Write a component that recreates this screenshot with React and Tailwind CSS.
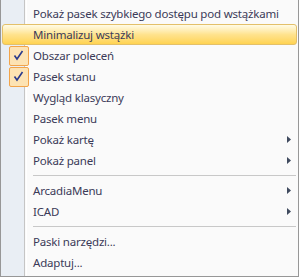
const items = [
  { label: 'Pokaż pasek szybkiego dostępu pod wstążkami' },
  { label: 'Minimalizuj wstążki', active: true },
  { label: 'Obszar poleceń', checked: true },
  { label: 'Pasek stanu', checked: true },
  { label: 'Wygląd klasyczny' },
  { label: 'Pasek menu' },
  { label: 'Pokaż kartę', sub: true },
  { label: 'Pokaż panel', sub: true },
  { sep: true },
  { label: 'ArcadiaMenu', sub: true },
  { label: 'ICAD', sub: true },
  { sep: true },
  { label: 'Paski narzędzi...' },
  { label: 'Adaptuj...' },
];

function Check() {
  return (
    <div className="w-[20px] h-[20px] rounded-[2px] border border-[#f2a44a] bg-[#fde3b3] flex items-center justify-center">
      <svg width="11" height="11" viewBox="0 0 11 11">
        <path d="M1.5 5.5 L4 9 L9.5 1" fill="none" stroke="#2a3a8c" strokeWidth="1.6" />
      </svg>
    </div>
  );
}

function Row({ item }) {
  if (item.sep) {
    return (
      <div className="h-[9px] flex items-center pl-[32px] pr-[2px]">
        <div className="h-px w-full bg-[#c8c8c8]" />
      </div>
    );
  }
  return (
    <div
      className={`relative h-[21px] flex items-center mx-[1px] rounded-[3px] border ${
        item.active
          ? 'border-[#e3c06a] bg-gradient-to-b from-[#fffbe6] via-[#ffe38e] to-[#ffd350]'
          : 'border-transparent'
      }`}
    >
      <div className="w-[30px] flex items-center justify-center pl-[1px]">
        {item.checked && <Check />}
      </div>
      <span className="flex-1 whitespace-nowrap text-[11.5px] tracking-[-0.2px] text-[#3b3b58] leading-none">{item.label}</span>
      {item.sub && (
        <svg className="mr-[5px]" width="4" height="7" viewBox="0 0 4 7">
          <path d="M0 0 L4 3.5 L0 7 Z" fill="#3f4a5e" />
        </svg>
      )}
    </div>
  );
}

export default function App() {
  return (
    <div className="w-[300px] h-[278px] bg-white" style={{ fontFamily: '"Noto Sans", "Open Sans", sans-serif' }}>
      <div className="relative w-[299px] h-[277px] border-l border-r border-b border-[#979797] bg-[#fafafa] overflow-hidden">
        <div className="absolute left-0 top-0 bottom-0 w-[24px] bg-[#e9eef4] border-r border-[#c5c5c5]" />
        <div className="absolute left-[25px] top-0 bottom-0 w-px bg-white" />
        <div className="relative flex flex-col pt-[3px]">
          {items.map((item, i) => (
            <Row key={i} item={item} />
          ))}
        </div>
      </div>
    </div>
  );
}
